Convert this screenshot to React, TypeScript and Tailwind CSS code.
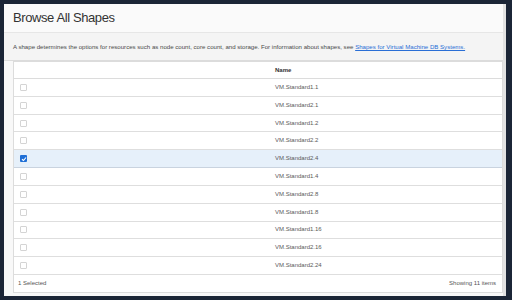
import React from "react";

const shapes = [
  "VM.Standard1.1",
  "VM.Standard2.1",
  "VM.Standard1.2",
  "VM.Standard2.2",
  "VM.Standard2.4",
  "VM.Standard1.4",
  "VM.Standard2.8",
  "VM.Standard1.8",
  "VM.Standard1.16",
  "VM.Standard2.16",
  "VM.Standard2.24",
];

const selected = "VM.Standard2.4";

function Checkbox({ checked }: { checked: boolean }) {
  if (checked) {
    return (
      <span className="flex h-[7px] w-[7px] items-center justify-center rounded-[1px] bg-[#1f6fd6]">
        <svg width="6" height="6" viewBox="0 0 12 12" fill="none" stroke="white" strokeWidth="2.2">
          <polyline points="2 6.5 5 9 10 3" />
        </svg>
      </span>
    );
  }
  return <span className="block h-[7px] w-[7px] rounded-[1px] border border-[#d4d4d4] bg-white" />;
}

export default function App() {
  return (
    <div
      className="h-[300px] w-[512px] bg-[#1b2536] p-[4px]"
      style={{ fontFamily: '"Liberation Sans", Arial, sans-serif' }}
    >
      <div className="flex h-[292px] w-[502px] flex-col border-r-[3px] border-[#e2e2e2] bg-[#f8f8f8]">
        <div className="flex h-[29px] shrink-0 items-center border-b border-[#e6e6e6] bg-[#fafafa] pl-[9px]">
          <h1 className="text-[13px] font-normal tracking-[-0.4px] text-[#333]">Browse All Shapes</h1>
        </div>
        <div className="flex h-[28px] shrink-0 items-center border-b border-[#dcdcdc] bg-[#f4f4f4] pl-[9px] text-[6.1px] text-[#4a4a4a]">
          <p>
            A shape determines the options for resources such as node count, core count, and storage. For information
            about shapes, see{" "}
            <a className="text-[#2a6fd6] underline" href="#">
              Shapes for Virtual Machine DB Systems.
            </a>
          </p>
        </div>
        <div className="ml-[9px] flex flex-col border border-[#dcdcdc] bg-white">
          <div className="flex h-[17px] items-center border-b border-[#dcdcdc] text-[6px] font-bold text-[#333]">
            <div className="w-[261px]" />
            <div>Name</div>
          </div>
          {shapes.map((s) => {
            const isSel = s === selected;
            return (
              <div
                key={s}
                className={
                  isSel
                    ? "flex h-[17.82px] items-center border-b border-[#c9d3df] bg-[#e6f0fa] text-[6px] text-[#5a5a5a]"
                    : "flex h-[17.82px] items-center border-b border-[#dedede] text-[6px] text-[#5a5a5a]"
                }
              >
                <div className="w-[261px] pl-[6px]">
                  <Checkbox checked={isSel} />
                </div>
                <div>{s}</div>
              </div>
            );
          })}
          <div className="flex h-[17px] items-center justify-between px-[4px] text-[6px] text-[#555]">
            <span>1 Selected</span>
            <span className="pr-[2px]">Showing 11 items</span>
          </div>
        </div>
      </div>
    </div>
  );
}
